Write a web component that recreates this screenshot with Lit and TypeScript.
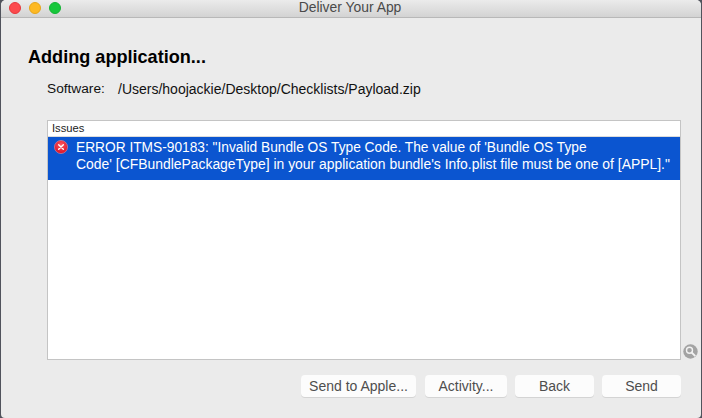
import { LitElement, html, css } from "lit";
import { customElement } from "lit/decorators.js";

@customElement("app-root")
export class AppRoot extends LitElement {
  static styles = css`
    :host { display: block; width: 702px; height: 418px; overflow: hidden; background: #50535c; font-family: "Liberation Sans", Arial, sans-serif; }
    .window { box-sizing: border-box; margin-left: 1px; width: 700px; height: 418px; background: #ebebeb; border-radius: 5px 5px 4px 4px; overflow: hidden; display: flex; flex-direction: column; }
    .titlebar { height: 17px; flex: none; border-bottom: 1px solid #b8b8b8; background: linear-gradient(#ebebeb, #d3d3d3); display: flex; align-items: center; position: relative; padding-left: 8px; gap: 8px; }
    .light { width: 12px; height: 12px; border-radius: 50%; margin-top: -2px; box-sizing: border-box; }
    .red { background: #fc4a4d; border: 1px solid #e5383c; }
    .yellow { background: #fdb924; border: 1px solid #e5a51b; }
    .green { background: #17c73b; border: 1px solid #13b333; }
    .wintitle { position: absolute; left: 0; right: 0; top: 0; text-align: center; font-size: 13.9px; line-height: 15px; color: #4a4a4a; padding-right: 2px; }
    .content { flex: 1; display: flex; flex-direction: column; padding: 29px 20px 0 27px; min-height: 0; position: relative; }
    h1 { margin: 0; font-size: 18.1px; line-height: 20px; font-weight: 700; color: #000; }
    .software { margin: 14px 0 0 19px; display: flex; font-size: 14px; line-height: 16px; color: #111; }
    .software .label { width: 71px; font-size: 13.7px; }
    .table { margin: 23px 0 0 19px; height: 240px; box-sizing: border-box; border: 1px solid #c4c4c4; background: #fff; display: flex; flex-direction: column; }
    .head { height: 15px; font-size: 11.2px; line-height: 15px; padding-left: 4px; color: #222; border-bottom: 1px solid #dcdcdc; flex: none; }
    .row { height: 43px; background: #0b55d0; color: #fff; display: flex; line-height: 17px; flex: none; }
    .row svg { flex: none; margin: 3px 0 0 6px; }
    .msg { margin: 2px 0 0 8px; white-space: nowrap; }
    .l1 { display: block; font-size: 13.74px; }
    .l2 { display: block; font-size: 13.92px; }
    .mag { position: absolute; left: 682px; top: 326px; width: 15px; height: 15px; }
    .buttons { display: flex; justify-content: flex-end; gap: 8px; margin: 15px 0 0 0; }
    button { all: unset; box-sizing: border-box; height: 22px; background: #fcfcfc; border-radius: 4px; box-shadow: 0 1px 0 #d4d4d4; font-family: inherit; font-size: 14px; line-height: 22px; color: #4e4e4e; text-align: center; }
    .b1 { width: 115px; margin-right: 1px; }
    .b2 { width: 82px; }
    .b3 { width: 79px; }
    .b4 { width: 79px; }
  `;

  render() {
    return html`
      <div class="window">
        <div class="titlebar">
          <span class="light red"></span><span class="light yellow"></span><span class="light green"></span>
          <div class="wintitle">Deliver Your App</div>
        </div>
        <div class="content">
          <h1>Adding application...</h1>
          <div class="software"><span class="label">Software:</span><span>/Users/hoojackie/Desktop/Checklists/Payload.zip</span></div>
          <div class="table">
            <div class="head">Issues</div>
            <div class="row">
              <svg width="14" height="14" viewBox="0 0 15 15">
                <defs><radialGradient id="e" cx="50%" cy="35%" r="65%"><stop offset="0" stop-color="#ff5a60"/><stop offset="1" stop-color="#d60f28"/></radialGradient></defs>
                <circle cx="7.5" cy="7.5" r="7" fill="url(#e)" stroke="#f09aa3" stroke-width=".6"/>
                <path d="M5 5l5 5M10 5l-5 5" stroke="#fff" stroke-width="1.5" stroke-linecap="round"/>
              </svg>
              <div class="msg"><span class="l1">ERROR ITMS-90183: "Invalid Bundle OS Type Code. The value of 'Bundle OS Type</span><span class="l2">Code' [CFBundlePackageType] in your application bundle's Info.plist file must be one of [APPL]."</span></div>
            </div>
          </div>
          <svg class="mag" viewBox="0 0 15 15">
            <circle cx="7.5" cy="7.5" r="7.2" fill="#a3a3a3"/>
            <circle cx="6.5" cy="6.3" r="3" fill="#a3a3a3" stroke="#f2f2f2" stroke-width="1.4"/>
            <path d="M8.8 8.6l3 3" stroke="#f2f2f2" stroke-width="2" stroke-linecap="round"/>
          </svg>
          <div class="buttons">
            <button class="b1">Send to Apple...</button>
            <button class="b2">Activity...</button>
            <button class="b3">Back</button>
            <button class="b4">Send</button>
          </div>
        </div>
      </div>
    `;
  }
}
